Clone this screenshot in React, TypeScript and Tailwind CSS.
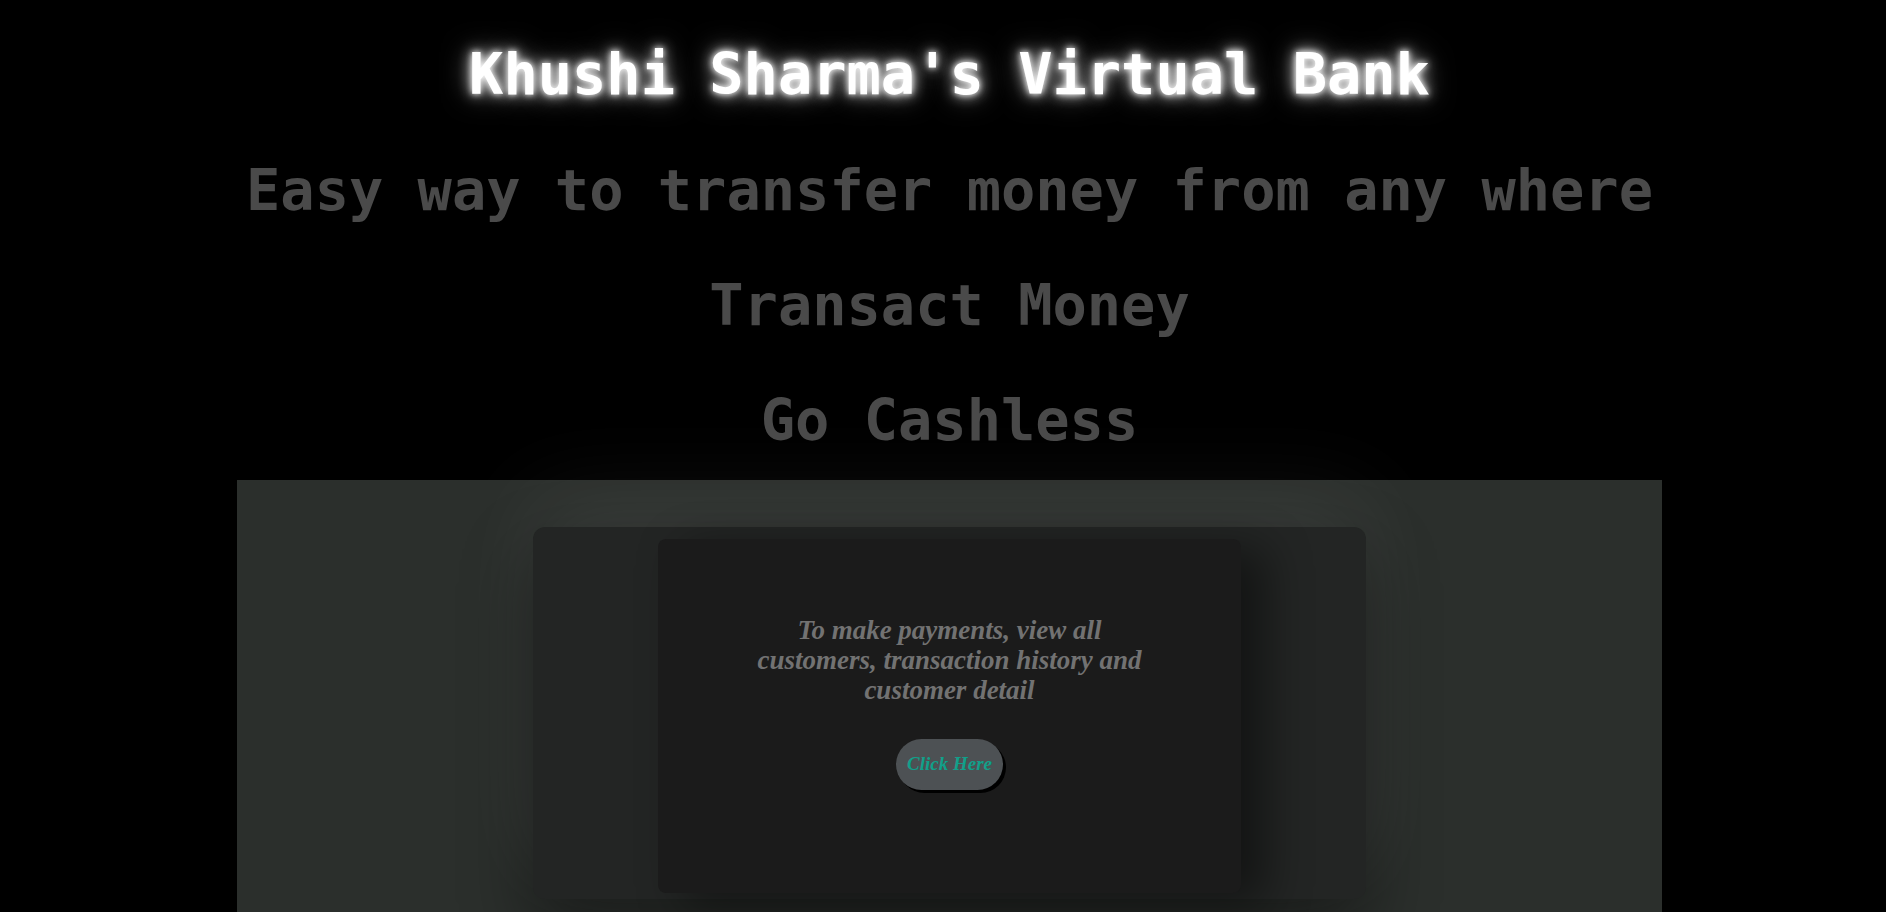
import React from "react";

export default function App() {
  const mono = "font-['DejaVu_Sans_Mono','Liberation_Mono',monospace]";
  const serif = "font-['Liberation_Serif','DejaVu_Serif',serif]";
  return (
    <div className="min-h-[912px] w-full bg-black overflow-hidden">
      <div className="flex flex-col items-center pl-[13px] pt-[41px]">
        <h1
          className={`${mono} text-[57px] leading-[67px] font-bold text-white whitespace-nowrap [text-shadow:0_0_6px_#fff,0_0_14px_rgba(255,255,255,0.9),0_0_28px_rgba(255,255,255,0.55)]`}
        >
          Khushi Sharma's Virtual Bank
        </h1>
        <div className="mt-[49px] flex flex-col items-center gap-[48px]">
          <h2 className={`${mono} text-[57px] leading-[67px] font-bold text-[#4a4a4a] whitespace-nowrap`}>
            Easy way to transfer money from any where
          </h2>
          <h2 className={`${mono} text-[57px] leading-[67px] font-bold text-[#4a4a4a] whitespace-nowrap`}>
            Transact Money
          </h2>
          <h2 className={`${mono} text-[57px] leading-[67px] font-bold text-[#4a4a4a] whitespace-nowrap`}>
            Go Cashless
          </h2>
        </div>
        <section className="mt-[26px] w-[1425px] h-[500px] bg-[#2b2f2c] flex justify-center pt-[47px]">
          <div className="w-[833px] h-[372px] rounded-[12px] bg-[#232524] flex justify-center pt-[12px] shadow-[0_-30px_90px_rgba(255,255,255,0.07),0_30px_70px_rgba(0,0,0,0.45)]">
            <div className="w-[583px] h-[354px] rounded-[8px] bg-[#1b1b1b] flex flex-col items-center pt-[76px] shadow-[25px_10px_45px_rgba(0,0,0,0.45)]">
              <p className={`${serif} w-[405px] text-center italic font-bold text-[27px] leading-[30px] text-[#727272]`}>
                To make payments, view all customers, transaction history and customer detail
              </p>
              <button
                className={`${serif} mt-[34px] w-[107px] h-[51px] rounded-full bg-[#4d5154] italic font-bold text-[19px] text-[#11a08a] shadow-[3px_3px_0_#000]`}
              >
                Click Here
              </button>
            </div>
          </div>
        </section>
      </div>
    </div>
  );
}
